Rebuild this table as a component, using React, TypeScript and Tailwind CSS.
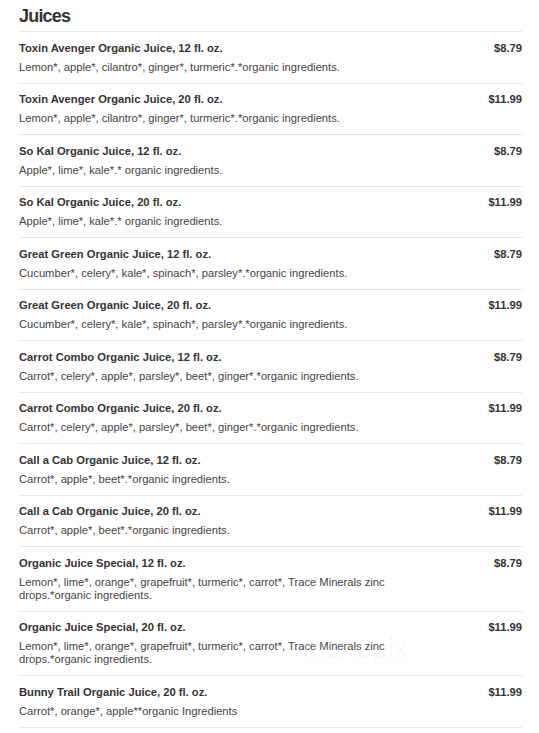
import React from "react";

type Item = { name: string; price: string; desc: string };

const items: Item[] = [
  { name: "Toxin Avenger Organic Juice, 12 fl. oz.", price: "$8.79", desc: "Lemon*, apple*, cilantro*, ginger*, turmeric*.*organic ingredients." },
  { name: "Toxin Avenger Organic Juice, 20 fl. oz.", price: "$11.99", desc: "Lemon*, apple*, cilantro*, ginger*, turmeric*.*organic ingredients." },
  { name: "So Kal Organic Juice, 12 fl. oz.", price: "$8.79", desc: "Apple*, lime*, kale*.* organic ingredients." },
  { name: "So Kal Organic Juice, 20 fl. oz.", price: "$11.99", desc: "Apple*, lime*, kale*.* organic ingredients." },
  { name: "Great Green Organic Juice, 12 fl. oz.", price: "$8.79", desc: "Cucumber*, celery*, kale*, spinach*, parsley*.*organic ingredients." },
  { name: "Great Green Organic Juice, 20 fl. oz.", price: "$11.99", desc: "Cucumber*, celery*, kale*, spinach*, parsley*.*organic ingredients." },
  { name: "Carrot Combo Organic Juice, 12 fl. oz.", price: "$8.79", desc: "Carrot*, celery*, apple*, parsley*, beet*, ginger*.*organic ingredients." },
  { name: "Carrot Combo Organic Juice, 20 fl. oz.", price: "$11.99", desc: "Carrot*, celery*, apple*, parsley*, beet*, ginger*.*organic ingredients." },
  { name: "Call a Cab Organic Juice, 12 fl. oz.", price: "$8.79", desc: "Carrot*, apple*, beet*.*organic ingredients." },
  { name: "Call a Cab Organic Juice, 20 fl. oz.", price: "$11.99", desc: "Carrot*, apple*, beet*.*organic ingredients." },
  { name: "Organic Juice Special, 12 fl. oz.", price: "$8.79", desc: "Lemon*, lime*, orange*, grapefruit*, turmeric*, carrot*, Trace Minerals zinc drops.*organic ingredients." },
  { name: "Organic Juice Special, 20 fl. oz.", price: "$11.99", desc: "Lemon*, lime*, orange*, grapefruit*, turmeric*, carrot*, Trace Minerals zinc drops.*organic ingredients." },
  { name: "Bunny Trail Organic Juice, 20 fl. oz.", price: "$11.99", desc: "Carrot*, orange*, apple**organic Ingredients" },
];

export default function App() {
  return (
    <div
      className="relative min-h-[733px] w-[539px] bg-white pl-[19px] pr-[17px] pt-[4px] text-[#333]"
      style={{ fontFamily: '"Liberation Sans", Arial, sans-serif' }}
    >
      <h1 className="mb-[3px] text-[18px] font-bold leading-[24px] tracking-[-0.8px] text-[#333]">Juices</h1>
      <div className="border-b border-[#e6e6e6]">
        {items.map((it, i) => (
          <div key={i} className="border-t border-[#e6e6e6] pt-[7.5px] pb-[9px]">
            <div className="flex items-start justify-between">
              <div className="text-[11.2px] font-bold leading-[16px] text-[#333]">{it.name}</div>
              <div className="text-[11.2px] font-bold leading-[16px] text-[#333]">{it.price}</div>
            </div>
            <div className="mt-[5px] w-3/4 text-[11.2px] leading-[13px] text-[#444]">{it.desc}</div>
          </div>
        ))}
      </div>
      <div
        className="pointer-events-none absolute left-[303px] top-[632px] text-[29px] font-thin leading-none text-[#e4e4e4]"
        style={{ fontFamily: "Lato, sans-serif" }}
      >
        menupix
      </div>
    </div>
  );
}
